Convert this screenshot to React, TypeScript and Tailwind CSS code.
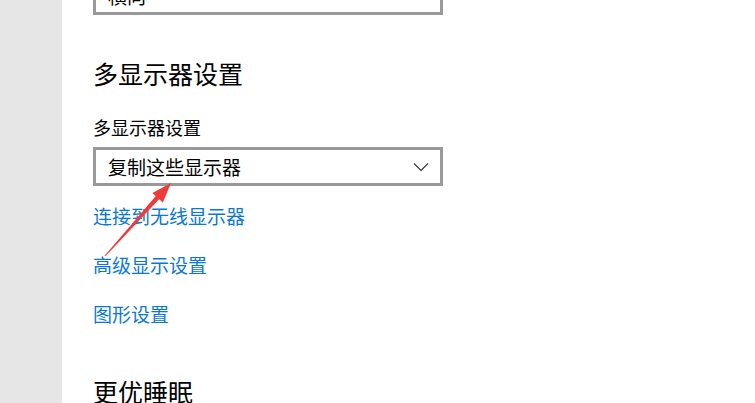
import React from "react";

const font = { fontFamily: '"Noto Sans CJK SC", "Noto Sans", sans-serif' };

export default function App() {
  return (
    <div className="relative flex h-[403px] w-[755px] items-start overflow-hidden bg-white" style={font}>
      <div className="h-[403px] w-[62px] shrink-0 bg-[#e6e6e6]" />
      <div className="flex shrink-0 flex-col pl-[31px] [&>*]:shrink-0">
        <div className="-mt-[23px] flex h-[38px] w-[350px] items-center border-[3px] border-[#999999] px-[12px] text-[19px] text-black">
          横向
        </div>
        <div className="mt-[41px] text-[25px] leading-[34px] text-black">多显示器设置</div>
        <div className="mt-[24px] text-[18px] leading-[26px] text-black">多显示器设置</div>
        <div className="mt-[7px] flex h-[39px] w-[350px] items-center justify-between border-[3px] border-[#999999] pl-[12px] pr-[11px]">
          <span className="text-[19px] leading-[26px] text-black">复制这些显示器</span>
          <svg width="16" height="10" viewBox="0 0 16 10" className="mt-[1px]">
            <path d="M1 1.5 L8 8.5 L15 1.5" fill="none" stroke="#333" strokeWidth="1.1" />
          </svg>
        </div>
        <div className="mt-[17px] text-[19px] leading-[26px] text-[#0a78d7]">连接到无线显示器</div>
        <div className="mt-[23px] text-[19px] leading-[26px] text-[#0a78d7]">高级显示设置</div>
        <div className="mt-[23px] text-[19px] leading-[26px] text-[#0a78d7]">图形设置</div>
        <div className="mt-[47px] text-[25px] leading-[34px] text-black">更优睡眠</div>
      </div>
      <svg className="pointer-events-none absolute left-0 top-0" width="755" height="403">
        <polygon points="104.6,255.7 105.4,256.3 159.8,198.6 156.2,195.4" fill="#f03a3a" />
        <polygon points="171,183 152.4,193.1 162.8,202.5" fill="#f03a3a" />
      </svg>
    </div>
  );
}
